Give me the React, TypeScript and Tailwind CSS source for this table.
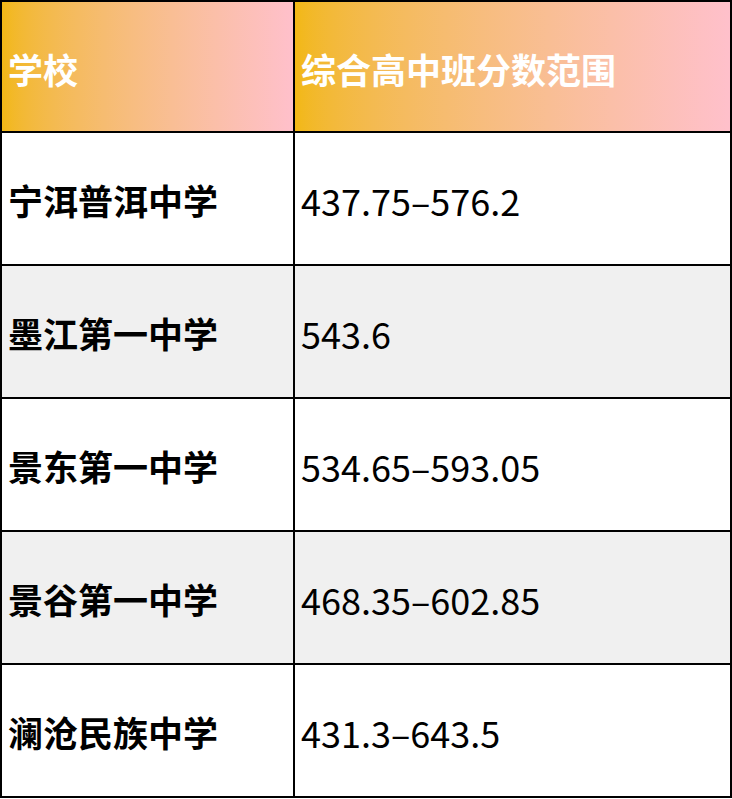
const rows = [
  { school: '宁洱普洱中学', range: '437.75–576.2' },
  { school: '墨江第一中学', range: '543.6' },
  { school: '景东第一中学', range: '534.65–593.05' },
  { school: '景谷第一中学', range: '468.35–602.85' },
  { school: '澜沧民族中学', range: '431.3–643.5' },
];

const font = { fontFamily: '"Noto Sans CJK SC", "Noto Sans", sans-serif' };

export default function App() {
  return (
    <div className="w-[732px] bg-white" style={font}>
      <div className="border-t-2 border-l-2 border-black">
        {/* Header */}
        <div className="grid grid-cols-[293px_437px]">
          <div className="h-[131px] flex items-center pl-[6px] pt-[4px] border-r-2 border-b-2 border-black bg-gradient-to-r from-[#f2b814] to-[#ffc0cb]">
            <span className="text-[35px] font-bold text-white leading-none">学校</span>
          </div>
          <div className="h-[131px] flex items-center pl-[6px] pt-[4px] border-r-2 border-b-2 border-black bg-gradient-to-r from-[#f2b814] to-[#ffc0cb]">
            <span className="text-[35px] font-bold text-white leading-none">综合高中班分数范围</span>
          </div>
        </div>

        {/* Body */}
        {rows.map((r, i) => (
          <div
            key={r.school}
            className={`grid grid-cols-[293px_437px] ${i % 2 === 1 ? 'bg-[#f0f0f0]' : 'bg-white'}`}
          >
            <div className="h-[133px] flex items-center pl-[6px] pt-[2px] border-r-2 border-b-2 border-black">
              <span className="text-[35px] font-bold text-black leading-none">{r.school}</span>
            </div>
            <div className="h-[133px] flex items-center pl-[6px] pt-[2px] border-r-2 border-b-2 border-black">
              <span className="text-[36px] text-black leading-none">{r.range}</span>
            </div>
          </div>
        ))}
      </div>
    </div>
  );
}
